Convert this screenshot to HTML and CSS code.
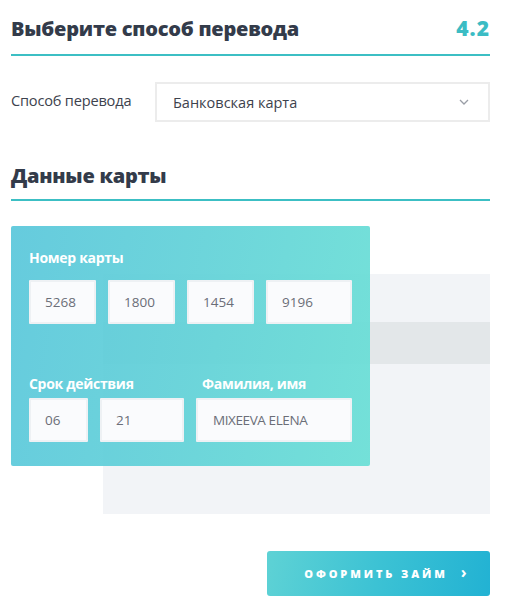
FILE: index.html
```html
<!DOCTYPE html>
<html lang="ru">
<head>
<meta charset="utf-8">
<link rel="stylesheet" href="styles.css">
</head>
<body>
<div class="page">
  <div class="section-head">
    <h1 class="title">Выберите способ перевода</h1>
    <span class="step">4.2</span>
  </div>

  <div class="field-row">
    <label class="field-label">Способ перевода</label>
    <div class="select">
      <span>Банковская карта</span>
      <svg class="chev" width="10" height="6" viewBox="0 0 10 6"><path d="M1 1l4 4 4-4" fill="none" stroke="#9a9ea6" stroke-width="1.3"/></svg>
    </div>
  </div>

  <div class="section-head second">
    <h2 class="title">Данные карты</h2>
  </div>

  <div class="cards">
    <div class="card-back"><div class="stripe"></div></div>
    <div class="card-front">
      <div class="card-label">Номер карты</div>
      <div class="num-row">
        <div class="inp w67">5268</div>
        <div class="inp w67">1800</div>
        <div class="inp w67">1454</div>
        <div class="inp w86">9196</div>
      </div>
      <div class="bottom-row">
        <div class="group">
          <div class="card-label">Срок действия</div>
          <div class="exp-row">
            <div class="inp w59">06</div>
            <div class="inp w84">21</div>
          </div>
        </div>
        <div class="group">
          <div class="card-label name-label">Фамилия, имя</div>
          <div class="inp w156 caps">MIXEEVA ELENA</div>
        </div>
      </div>
    </div>
  </div>

  <div class="actions">
    <button class="btn">ОФОРМИТЬ ЗАЙМ <span class="arrow">›</span></button>
  </div>
</div>
</body>
</html>
```

FILE: styles.css
```css
* { box-sizing: border-box; }
html, body { margin: 0; padding: 0; background: #fff; }
body { font-family: "Open Sans", "Noto Sans", sans-serif; color: #333b4a; }

.page { width: 479px; margin-left: 11px; padding-top: 14px; }

.section-head {
  display: flex;
  justify-content: space-between;
  align-items: baseline;
  border-bottom: 2px solid #3cbfc4;
  padding-bottom: 11px;
}
.section-head.second { margin-top: 40px; padding-bottom: 9px; }

.title {
  margin: 0;
  font-size: 20px;
  line-height: 28px;
  font-weight: 800;
  color: #333b4a;
  letter-spacing: -0.25px;
}
.step {
  font-size: 21px;
  line-height: 28px;
  font-weight: 800;
  color: #3bbcc4;
  letter-spacing: 1px;
}

.field-row {
  display: flex;
  align-items: center;
  margin-top: 26px;
}
.field-label {
  width: 144px;
  font-size: 14.6px;
  letter-spacing: -0.2px;
  color: #3d424d;
  position: relative;
  top: -2px;
}
.select {
  flex: 1;
  height: 40px;
  border: 2px solid #ececec;
  display: flex;
  align-items: center;
  justify-content: space-between;
  padding: 0 19px 0 16px;
  font-size: 14.5px;
  color: #3d424d;
}

.cards {
  display: grid;
  margin-top: 25px;
  height: 288px;
}
.card-back, .card-front { grid-area: 1 / 1; }
.card-back {
  margin: 48px 0 0 92px;
  width: 387px;
  height: 240px;
  background: #f2f4f7;
  padding-top: 48px;
}
.stripe { height: 42px; background: #e3e7e9; }

.card-front {
  width: 359px;
  height: 240px;
  border-radius: 2px;
  background: linear-gradient(100deg, rgba(90,199,219,0.93) 0%, rgba(98,210,216,0.93) 50%, rgba(106,223,214,0.93) 100%);
  padding: 22px 0 0 18px;
  position: relative;
}
.card-label {
  color: #fff;
  font-weight: 700;
  font-size: 14px;
  line-height: 20px;
  letter-spacing: -0.3px;
}
.num-row { display: flex; gap: 12px; margin-top: 12px; }
.inp {
  height: 44px;
  background: #fafbfd;
  border: 2px solid #eef1f4;
  border-radius: 1px;
  display: flex;
  align-items: center;
  padding-left: 14px;
  font-size: 13.5px;
  color: #6b6e78;
}
.inp.caps { letter-spacing: -0.4px; padding-left: 15px; }
.w67 { width: 67px; }
.w86 { width: 86px; }
.w59 { width: 59px; }
.w84 { width: 84px; }
.w156 { width: 156px; }

.bottom-row { display: flex; gap: 12px; margin-top: 50px; }
.group .card-label { margin-bottom: 4px; }
.exp-row { display: flex; gap: 12px; }
.name-label { padding-left: 6px; }

.actions { display: flex; justify-content: flex-end; margin-top: 37px; }
.btn {
  width: 223px;
  height: 45px;
  border: 0;
  border-radius: 3px;
  background: linear-gradient(100deg, #5ed2d5 0%, #3cc2d4 50%, #22b2d3 100%);
  color: #fff;
  font-family: "Open Sans", sans-serif;
  font-weight: 800;
  font-size: 11px;
  letter-spacing: 2.9px;
  display: flex;
  align-items: center;
  justify-content: center;
  gap: 13px;
  padding: 0 0 0 14px;
}
.arrow { font-size: 16px; font-weight: 700; letter-spacing: 0; position: relative; top: -2px; }
```
